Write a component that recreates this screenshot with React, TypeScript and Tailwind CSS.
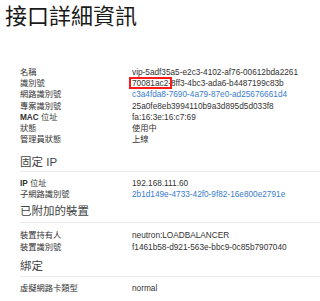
import React from "react";

type Row = { label: React.ReactNode; value: string; link?: boolean; boxed?: boolean };

function Rows({ rows }: { rows: Row[] }) {
  return (
    <div className="flex flex-col">
      {rows.map((r, i) => (
        <div key={i} className="flex h-[11.3px] items-center text-[8.25px] leading-[11.3px]">
          <div className="w-[112px] shrink-0 text-[#333]">{r.label}</div>
          <div className={"relative whitespace-nowrap " + (r.link ? "text-[#3a7ccc]" : "text-[#333]")}>
            {r.value}
            {r.boxed && (
              <div className="absolute left-[-3px] top-[-1px] h-[12.5px] w-[43px] border-2 border-[#ff1a1a]" />
            )}
          </div>
        </div>
      ))}
    </div>
  );
}

function Heading({ children, className }: { children: React.ReactNode; className: string }) {
  return (
    <div className={"border-b border-[#ececec] text-[11.5px] leading-[14px] text-[#444] " + className}>{children}</div>
  );
}

export default function App() {
  return (
    <div className="h-[301px] w-[320px] overflow-hidden bg-white font-['Liberation_Sans','Noto_Sans_CJK_TC',sans-serif]">
      <div className="pl-[5px] pt-[6px] text-[22px] leading-[22px] text-[#1a1a1a]">接口詳細資訊</div>
      <div className="pl-[20px]">
        <div className="mt-[38.65px]">
          <Rows
            rows={[
              { label: "名稱", value: "vip-5adf35a5-e2c3-4102-af76-00612bda2261" },
              { label: "識別號", value: "70081ac2-8ff3-4bc3-ada6-b4487199c83b", boxed: true },
              { label: "網路識別號", value: "c3a4fda8-7690-4a79-87e0-ad25676661d4", link: true },
              { label: "專案識別號", value: "25a0fe8eb3994110b9a3d895d5d033f8" },
              { label: <><b>MAC</b> 位址</>, value: "fa:16:3e:16:c7:69" },
              { label: "狀態", value: "使用中" },
              { label: "管理員狀態", value: "上線" },
            ]}
          />
        </div>
        <Heading className="mt-[9.25px] pb-[2px]">固定 IP</Heading>
        <div className="mt-[5.65px]">
          <Rows
            rows={[
              { label: <><b>IP</b> 位址</>, value: "192.168.111.60" },
              { label: "子網路識別號", value: "2b1d149e-4733-42f0-9f82-16e800e2791e", link: true },
            ]}
          />
        </div>
        <Heading className="mt-[3.75px] pb-[4px]">已附加的裝置</Heading>
        <div className="mt-[7.35px]">
          <Rows
            rows={[
              { label: "裝置持有人", value: "neutron:LOADBALANCER" },
              { label: "裝置識別號", value: "f1461b58-d921-563e-bbc9-0c85b7907040" },
            ]}
          />
        </div>
        <Heading className="mt-[6.05px] pb-[3.5px]">綁定</Heading>
        <div className="mt-[5.35px]">
          <Rows rows={[{ label: "虛擬網路卡類型", value: "normal" }]} />
        </div>
      </div>
    </div>
  );
}
